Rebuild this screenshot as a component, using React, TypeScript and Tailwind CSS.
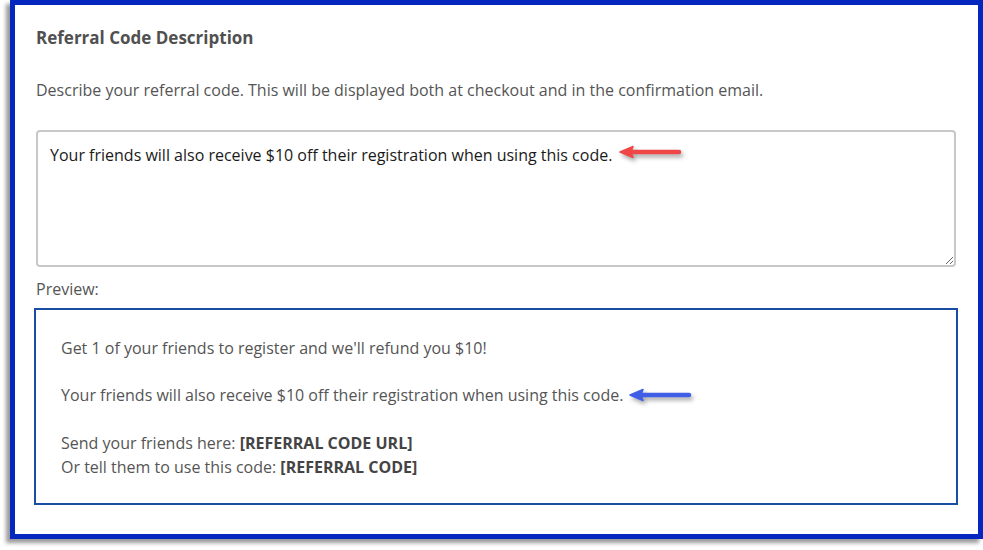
function Arrow({ color }: { color: string }) {
  return (
    <svg width="66" height="18" viewBox="0 0 66 18" className="overflow-visible" style={{ filter: "drop-shadow(2px 3px 2px rgba(0,0,0,0.35))" }}>
      <path d="M13 9 H61" stroke={color} strokeWidth="4.5" strokeLinecap="round" />
      <path d="M2 9 L15 3.5 L13 9 L15 14.5 Z" fill={color} stroke={color} strokeWidth="1.5" strokeLinejoin="round" />
    </svg>
  );
}

export default function App() {
  const body = { fontFamily: '"Open Sans", "Liberation Sans", sans-serif' };
  return (
    <div className="h-[550px] w-[983px] bg-white pl-[10px]" style={body}>
      <div className="h-[539px] w-[973px] border-[5px] border-[#0626c0] bg-white px-[21px] pt-[21px] shadow-[-4px_4px_4px_rgba(0,0,0,0.4)]">
        <h2 className="text-[17px] font-bold leading-6 text-[#505050]">Referral Code Description</h2>
        <p className="mt-[28px] text-[16px] leading-6 text-[#555]">
          Describe your referral code. This will be displayed both at checkout and in the confirmation email.
        </p>
        <div className="relative mt-[28px]">
          <textarea
            className="block h-[137px] w-[920px] resize-y rounded-[4px] border-2 border-[#c8c8c8] px-[12px] pt-[12px] text-[16px] leading-[22px] text-[#1a1a1a] outline-none"
            style={body}
            defaultValue="Your friends will also receive $10 off their registration when using this code."
          />
          <div className="pointer-events-none absolute left-[582px] top-[13px]">
            <Arrow color="#f04646" />
          </div>
        </div>
        <div className="mt-[10px] text-[16px] leading-6 text-[#555]">Preview:</div>
        <div className="-mx-[2px] mt-[7px] h-[197px] w-[924px] border-2 border-[#1a4ea3] px-[25px] pt-[26px] text-[16px] leading-6 text-[#555]">
          <p>Get 1 of your friends to register and we'll refund you $10!</p>
          <p className="mt-[23px] flex items-center">
            Your friends will also receive $10 off their registration when using this code.
            <span className="ml-[5px] inline-flex">
              <Arrow color="#3f5fe6" />
            </span>
          </p>
          <p className="mt-[24px]">
            Send your friends here: <b className="font-bold text-[#444]">[REFERRAL CODE URL]</b>
          </p>
          <p>
            Or tell them to use this code: <b className="font-bold text-[#444]">[REFERRAL CODE]</b>
          </p>
        </div>
      </div>
    </div>
  );
}
